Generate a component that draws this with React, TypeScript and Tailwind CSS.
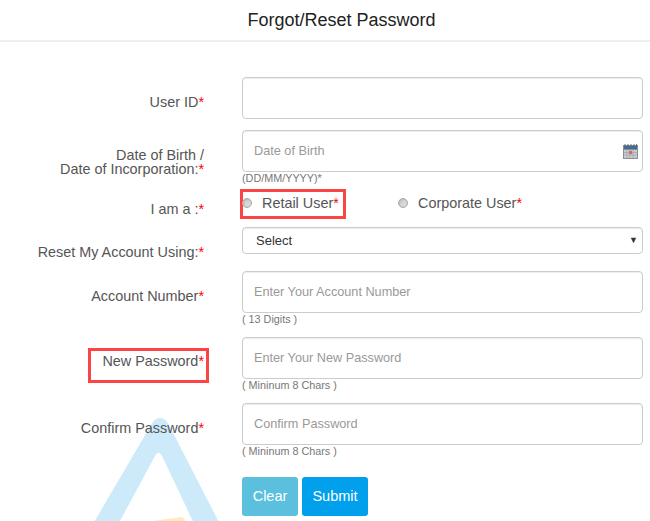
const inputClass =
  'h-[42px] w-full rounded-[4px] border border-[#ccc] bg-transparent px-[11px] pb-[1px] text-[12.7px] text-[#555] shadow-[inset_0_1px_1px_rgba(0,0,0,0.075)] outline-none placeholder:text-[#999]';

function Req() {
  return <span className="text-[#f00]">*</span>;
}

function Label({ children, className = '' }: { children: React.ReactNode; className?: string }) {
  return (
    <label className={`w-[204px] shrink-0 text-right text-[14.4px] leading-[14px] text-[#555] ${className}`}>
      {children}
    </label>
  );
}

function Hint({ children }: { children: React.ReactNode }) {
  return <p className="h-[13px] text-[10.8px] leading-[12px] text-[#777]">{children}</p>;
}

function Radio({ className = '' }: { className?: string }) {
  return (
    <span
      className={`h-[10px] w-[10px] shrink-0 rounded-full border border-[#aaa] bg-[#d8d8d8] shadow-[inset_1px_1px_2px_rgba(0,0,0,0.15)] ${className}`}
    />
  );
}

function CalendarIcon() {
  return (
    <svg width="15" height="15" viewBox="0 0 15 15" className="absolute right-[5px] top-[14px]">
      <rect x="0" y="1" width="15" height="14" fill="#8a8f96" />
      <rect x="1" y="2" width="13" height="3" fill="#3f6d9c" />
      <rect x="1" y="6" width="13" height="8" fill="#c9ccd0" />
      <path d="M1 8.5h13M1 11h13M4 6v8M7 6v8M10 6v8" stroke="#9a9ea4" strokeWidth="0.6" />
      <rect x="6" y="7" width="3" height="3" fill="#e2605f" />
      <path d="M2 0v2M5 0v2M8 0v2M11 0v2M13.5 0v2" stroke="#555" strokeWidth="0.8" />
    </svg>
  );
}

function Watermark() {
  return (
    <svg width="650" height="105" viewBox="0 416 650 105" className="absolute bottom-0 left-0 -z-10">
      <path
        d="M160 418c-4 0-7 3-9 7L87 534h26l42-78c2-4 5-4 7 0l37 78h26L169 425c-2-4-5-7-9-7z"
        fill="#cdeafb"
      />
      <path d="M153 521l28-4c2 0 3 1 4 4z" fill="#ffe9bd" />
    </svg>
  );
}

export default function App() {
  return (
    <div className="relative isolate h-[521px] w-[650px] overflow-hidden bg-white font-['Liberation_Sans',Arial,sans-serif]">
      <Watermark />

      <header className="flex h-[42px] items-center justify-center border-b-2 border-[#eee] pl-[33px] text-[18px] text-[#222]">
        Forgot/Reset Password
      </header>

      <form className="pt-[35px]">
        {/* user id */}
        <div className="flex">
          <Label className="pt-[18px]">
            User ID<Req />
          </Label>
          <div className="ml-[38px] w-[401px]">
            <input className={inputClass} />
          </div>
        </div>

        {/* date of birth */}
        <div className="mt-[11px] flex">
          <Label className="pt-[18px]">
            Date of Birth /<br />
            Date of Incorporation:<Req />
          </Label>
          <div className="relative ml-[38px] w-[401px]">
            <input className={inputClass} placeholder="Date of Birth" />
            <CalendarIcon />
            <Hint>(DD/MM/YYYY)*</Hint>
          </div>
        </div>

        {/* user type */}
        <div className="mt-[4px] flex h-[40px]">
          <Label className="pt-[13px]">
            I am a :<Req />
          </Label>
          <div className="ml-[36px] flex h-[30px] items-start">
            <div className="flex h-[30px] w-[106px] items-center border-[3px] border-[#fb4444] pb-[2px]">
              <Radio className="-ml-[1px]" />
              <span className="ml-[10px] mt-[2px] text-[14.4px] text-[#555]">
                Retail User<Req />
              </span>
            </div>
            <div className="ml-[52px] flex h-[30px] items-center pb-[2px]">
              <Radio />
              <span className="ml-[10px] mt-[2px] text-[14.4px] text-[#555]">
                Corporate User<Req />
              </span>
            </div>
          </div>
        </div>

        {/* reset using */}
        <div className="mt-[-2px] flex">
          <Label className="pt-[18px]">
            Reset My Account Using:<Req />
          </Label>
          <div className="relative ml-[38px] w-[401px]">
            <select className="h-[27px] w-full appearance-none rounded-[4px] border border-[#ccc] bg-transparent pl-[13px] text-[13px] text-[#333] shadow-[inset_0_1px_1px_rgba(0,0,0,0.075)] outline-none">
              <option>Select</option>
            </select>
            <span className="absolute right-[5px] top-[6px] text-[9px] leading-[14px] text-[#333]">▼</span>
          </div>
        </div>

        {/* account number */}
        <div className="mt-[12px] flex">
          <Label className="pt-[18px]">
            Account Number<Req />
          </Label>
          <div className="ml-[38px] w-[401px]">
            <input className={inputClass} placeholder="Enter Your Account Number" />
            <Hint>( 13 Digits )</Hint>
          </div>
        </div>

        {/* new password */}
        <div className="mt-[11px] flex">
          <div className="relative w-[204px] shrink-0">
            <Label className="absolute right-0 top-[17px]">
              New Password<Req />
            </Label>
            <span className="absolute right-[-5px] top-[11px] h-[35px] w-[121px] border-[3px] border-[#fb4444]" />
          </div>
          <div className="ml-[38px] w-[401px]">
            <input className={inputClass} placeholder="Enter Your New Password" />
            <Hint>( Mininum 8 Chars )</Hint>
          </div>
        </div>

        {/* confirm password */}
        <div className="mt-[11px] flex">
          <Label className="pt-[18px]">
            Confirm Password<Req />
          </Label>
          <div className="ml-[38px] w-[401px]">
            <input className={inputClass} placeholder="Confirm Password" />
            <Hint>( Mininum 8 Chars )</Hint>
          </div>
        </div>

        {/* actions */}
        <div className="ml-[242px] mt-[19px] flex gap-[4px]">
          <button type="button" className="h-[39px] w-[56px] rounded-[3px] bg-[#5bc0de] text-[14.5px] text-white">
            Clear
          </button>
          <button type="button" className="h-[39px] w-[66px] rounded-[3px] bg-[#00a0ec] text-[14.5px] text-white">
            Submit
          </button>
        </div>
      </form>
    </div>
  );
}
